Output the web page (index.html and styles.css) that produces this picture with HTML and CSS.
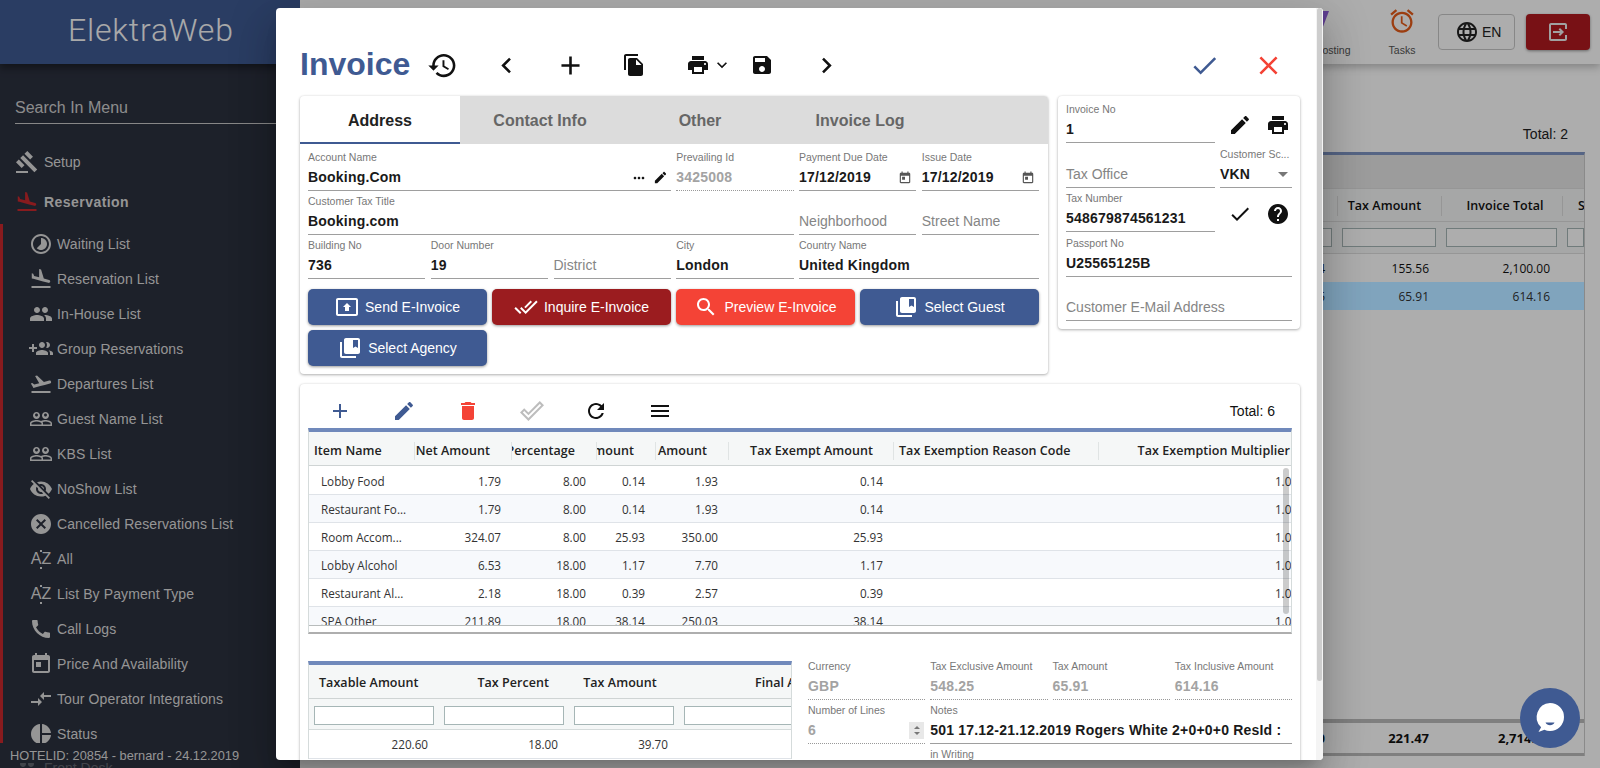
FILE: index.html
```html
<!DOCTYPE html>
<html lang="en">
<head>
  <meta charset="UTF-8">
  <meta name="viewport" content="width=device-width, initial-scale=1.0">
  <title>ElektraWeb - Invoice</title>
  <link rel="stylesheet" href="styles.css">
</head>
<body>
  <!-- material icons used all over the page -->
  <svg class="sprite" xmlns="http://www.w3.org/2000/svg">
    <symbol id="i-history" viewBox="0 0 24 24"><path d="M13 3c-4.97 0-9 4.03-9 9H1l3.89 3.89.07.14L9 12H6c0-3.87 3.13-7 7-7s7 3.13 7 7-3.13 7-7 7c-1.93 0-3.68-.79-4.94-2.06l-1.42 1.42C8.27 19.99 10.51 21 13 21c4.97 0 9-4.03 9-9s-4.03-9-9-9zm-1 5v5l4.28 2.54.72-1.21-3.5-2.08V8H12z"/></symbol>
    <symbol id="i-left" viewBox="0 0 24 24"><path d="M15.41 7.41L14 6l-6 6 6 6 1.41-1.41L10.83 12z"/></symbol>
    <symbol id="i-right" viewBox="0 0 24 24"><path d="M10 6L8.59 7.41 13.17 12l-4.58 4.59L10 18l6-6z"/></symbol>
    <symbol id="i-add" viewBox="0 0 24 24"><path d="M19 13h-6v6h-2v-6H5v-2h6V5h2v6h6v2z"/></symbol>
    <symbol id="i-copy" viewBox="0 0 24 24"><path d="M16 1H4c-1.1 0-2 .9-2 2v14h2V3h12V1zm-1 4l6 6v10c0 1.1-.9 2-2 2H7.99C6.89 23 6 22.1 6 21l.01-14c0-1.1.89-2 1.99-2h7zm-1 7h5.5L14 6.5V12z"/></symbol>
    <symbol id="i-print" viewBox="0 0 24 24"><path d="M19 8H5c-1.66 0-3 1.34-3 3v6h4v4h12v-4h4v-6c0-1.66-1.34-3-3-3zm-3 11H8v-5h8v5zm3-7c-.55 0-1-.45-1-1s.45-1 1-1 1 .45 1 1-.45 1-1 1zm-1-9H6v4h12V3z"/></symbol>
    <symbol id="i-expand" viewBox="0 0 24 24"><path d="M16.59 8.59L12 13.17 7.41 8.59 6 10l6 6 6-6z"/></symbol>
    <symbol id="i-save" viewBox="0 0 24 24"><path d="M17 3H5c-1.11 0-2 .9-2 2v14c0 1.1.89 2 2 2h14c1.1 0 2-.9 2-2V7l-4-4zm-5 16c-1.66 0-3-1.34-3-3s1.34-3 3-3 3 1.34 3 3-1.34 3-3 3zm3-10H5V5h10v4z"/></symbol>
    <symbol id="i-check" viewBox="0 0 24 24"><path d="M9 16.17L4.83 12l-1.42 1.41L9 19 21 7l-1.41-1.41z"/></symbol>
    <symbol id="i-close" viewBox="0 0 24 24"><path d="M19 6.41L17.59 5 12 10.59 6.41 5 5 6.41 10.59 12 5 17.59 6.41 19 12 13.41 17.59 19 19 17.59 13.41 12z"/></symbol>
    <symbol id="i-edit" viewBox="0 0 24 24"><path d="M3 17.25V21h3.75L17.81 9.94l-3.75-3.75L3 17.25zM20.71 7.04c.39-.39.39-1.02 0-1.41l-2.34-2.34c-.39-.39-1.02-.39-1.41 0l-1.83 1.83 3.75 3.75 1.83-1.83z"/></symbol>
    <symbol id="i-more" viewBox="0 0 24 24"><path d="M6 10c-1.1 0-2 .9-2 2s.9 2 2 2 2-.9 2-2-.9-2-2-2zm12 0c-1.1 0-2 .9-2 2s.9 2 2 2 2-.9 2-2-.9-2-2-2zm-6 0c-1.1 0-2 .9-2 2s.9 2 2 2 2-.9 2-2-.9-2-2-2z"/></symbol>
    <symbol id="i-today" viewBox="0 0 24 24"><path d="M19 3h-1V1h-2v2H8V1H6v2H5c-1.11 0-1.99.9-1.99 2L3 19c0 1.1.89 2 2 2h14c1.1 0 2-.9 2-2V5c0-1.1-.9-2-2-2zm0 16H5V8h14v11zM7 10h5v5H7z"/></symbol>
    <symbol id="i-help" viewBox="0 0 24 24"><path d="M12 2C6.48 2 2 6.48 2 12s4.48 10 10 10 10-4.48 10-10S17.52 2 12 2zm1 17h-2v-2h2v2zm2.07-7.75l-.9.92C13.45 12.9 13 13.5 13 15h-2v-.5c0-1.1.45-2.1 1.17-2.83l1.24-1.26c.37-.36.59-.86.59-1.41 0-1.1-.9-2-2-2s-2 .9-2 2H8c0-2.21 1.79-4 4-4s4 1.79 4 4c0 .88-.36 1.68-.93 2.25z"/></symbol>
    <symbol id="i-search" viewBox="0 0 24 24"><path d="M15.5 14h-.79l-.28-.27C15.41 12.59 16 11.11 16 9.5 16 5.91 13.09 3 9.5 3S3 5.91 3 9.5 5.91 16 9.5 16c1.61 0 3.09-.59 4.23-1.57l.27.28v.79l5 4.99L20.49 19l-4.99-5zm-6 0C7.01 14 5 11.99 5 9.5S7.01 5 9.5 5 14 7.01 14 9.5 11.99 14 9.5 14z"/></symbol>
    <symbol id="i-doneall" viewBox="0 0 24 24"><path d="M18 7l-1.41-1.41-6.34 6.34 1.41 1.41L18 7zm4.24-1.41L11.66 16.17 7.48 12l-1.41 1.41L11.66 19l12-12-1.42-1.41zM.41 13.41L6 19l1.41-1.41L1.83 12 .41 13.41z"/></symbol>
    <symbol id="i-doneoutline" viewBox="0 0 24 24"><path d="M19.77 4.93l1.4 1.4L8.43 19.07l-5.6-5.6 1.4-1.4 4.2 4.2L19.77 4.93m0-2.83L8.43 13.44l-4.2-4.2L0 13.47l8.43 8.43L24 6.33 19.77 2.1z"/></symbol>
    <symbol id="i-bookmarks" viewBox="0 0 24 24"><path d="M4 6H2v14c0 1.1.9 2 2 2h14v-2H4V6zm16-4H8c-1.1 0-2 .9-2 2v12c0 1.1.9 2 2 2h12c1.1 0 2-.9 2-2V4c0-1.1-.9-2-2-2zm0 10l-2.5-1.5L15 12V4h5v8z"/></symbol>
    <symbol id="i-send" viewBox="0 0 24 24"><path d="M21 3H3c-1.11 0-2 .89-2 2v14c0 1.11.89 2 2 2h18c1.11 0 2-.89 2-2V5c0-1.11-.89-2-2-2zm0 16.02H3V4.98h18v14.04zM10 12H8l4-4 4 4h-2v4h-4v-4z"/></symbol>
    <symbol id="i-delete" viewBox="0 0 24 24"><path d="M6 19c0 1.1.9 2 2 2h8c1.1 0 2-.9 2-2V7H6v12zM19 4h-3.5l-1-1h-5l-1 1H5v2h14V4z"/></symbol>
    <symbol id="i-refresh" viewBox="0 0 24 24"><path d="M17.65 6.35C16.2 4.9 14.21 4 12 4c-4.42 0-7.99 3.58-7.99 8s3.57 8 7.99 8c3.73 0 6.84-2.55 7.73-6h-2.08c-.82 2.33-3.04 4-5.65 4-3.31 0-6-2.69-6-6s2.69-6 6-6c1.66 0 3.14.69 4.22 1.78L13 11h7V4l-2.35 2.35z"/></symbol>
    <symbol id="i-menu" viewBox="0 0 24 24"><path d="M3 18h18v-2H3v2zm0-5h18v-2H3v2zm0-7v2h18V6H3z"/></symbol>
    <symbol id="i-drop" viewBox="0 0 24 24"><path d="M7 10l5 5 5-5z"/></symbol>
    <symbol id="i-gavel" viewBox="0 0 24 24"><path d="M1 21h12v2H1zM5.245 8.07l2.83-2.827 14.14 14.142-2.828 2.828zM12.317 1l5.657 5.656-2.83 2.83-5.654-5.66zM3.825 9.485l5.657 5.657-2.828 2.828-5.657-5.657z"/></symbol>
    <symbol id="i-land" viewBox="0 0 24 24"><path d="M2.5 19h19v2h-19zm7.18-5.73l4.35 1.16 5.31 1.42c.8.21 1.62-.26 1.84-1.06.21-.8-.26-1.62-1.06-1.84l-5.31-1.42-2.76-9.02L10.12 2v8.28L5.15 8.95l-.93-2.32-1.45-.39v5.17l1.6.43 5.31 1.43z"/></symbol>
    <symbol id="i-takeoff" viewBox="0 0 24 24"><path d="M2.5 19h19v2h-19zm19.57-9.36c-.21-.8-1.04-1.28-1.84-1.06L14.92 10l-6.9-6.43-1.93.51 4.14 7.17-4.97 1.33-1.97-1.54-1.45.39 1.82 3.16.77 1.33 1.6-.43 5.31-1.42 4.35-1.16L21 11.49c.81-.23 1.28-1.05 1.07-1.85z"/></symbol>
    <symbol id="i-people" viewBox="0 0 24 24"><path d="M16 11c1.66 0 2.99-1.34 2.99-3S17.66 5 16 5c-1.66 0-3 1.34-3 3s1.34 3 3 3zm-8 0c1.66 0 2.99-1.34 2.99-3S9.66 5 8 5C6.34 5 5 6.34 5 8s1.34 3 3 3zm0 2c-2.33 0-7 1.17-7 3.5V19h14v-2.5c0-2.33-4.67-3.5-7-3.5zm8 0c-.29 0-.62.02-.97.05 1.16.84 1.97 1.97 1.97 3.45V19h6v-2.5c0-2.33-4.67-3.5-7-3.5z"/></symbol>
    <symbol id="i-groupadd" viewBox="0 0 24 24"><path d="M8 10H5V7H3v3H0v2h3v3h2v-3h3v-2zm10 1c1.66 0 2.99-1.34 2.99-3S19.66 5 18 5c-.32 0-.63.05-.91.14.57.81.9 1.79.9 2.86s-.34 2.04-.9 2.86c.28.09.59.14.91.14zm-5 0c1.66 0 2.99-1.34 2.99-3S14.66 5 13 5c-1.66 0-3 1.34-3 3s1.34 3 3 3zm6.62 2.16c.83.73 1.38 1.66 1.38 2.84v2h3v-2c0-1.54-2.37-2.49-4.38-2.84zM13 13c-2 0-6 1-6 3v2h12v-2c0-2-4-3-6-3z"/></symbol>
    <symbol id="i-outline" viewBox="0 0 24 24"><path d="M16.5 13c-1.2 0-3.07.34-4.5 1-1.43-.67-3.3-1-4.5-1C5.33 13 1 14.08 1 16.25V19h22v-2.75c0-2.17-4.33-3.25-6.5-3.25zm-4 4.5h-10v-1.25c0-.54 2.56-1.75 5-1.75s5 1.21 5 1.75v1.25zm9 0H14v-1.25c0-.46-.2-.86-.52-1.22.88-.3 1.96-.53 3.02-.53 2.44 0 5 1.21 5 1.75v1.25zM7.5 12c1.93 0 3.5-1.57 3.5-3.5S9.43 5 7.5 5 4 6.57 4 8.5 5.57 12 7.5 12zm0-5.5c.83 0 1.5.67 1.5 1.5s-.67 1.5-1.5 1.5S6 8.83 6 8s.67-1.5 1.5-1.5zm9 5.5c1.93 0 3.5-1.57 3.5-3.5S18.43 5 16.5 5 13 6.57 13 8.5s1.57 3.5 3.5 3.5zm0-5.5c.83 0 1.5.67 1.5 1.5s-.67 1.5-1.5 1.5S15 8.83 15 8s.67-1.5 1.5-1.5z"/></symbol>
    <symbol id="i-noshow" viewBox="0 0 24 24"><path d="M12 7c2.76 0 5 2.24 5 5 0 .65-.13 1.26-.36 1.83l2.92 2.92c1.51-1.26 2.7-2.89 3.43-4.75-1.73-4.39-6-7.5-11-7.5-1.4 0-2.74.25-3.98.7l2.16 2.16C10.74 7.13 11.35 7 12 7zM2 4.27l2.28 2.28.46.46C3.08 8.3 1.78 10.02 1 12c1.73 4.39 6 7.5 11 7.5 1.55 0 3.03-.3 4.38-.84l.42.42L19.73 22 21 20.73 3.27 3 2 4.27zM7.53 9.8l1.55 1.55c-.05.21-.08.43-.08.65 0 1.66 1.34 3 3 3 .22 0 .44-.03.65-.08l1.55 1.55c-.67.33-1.41.53-2.2.53-2.76 0-5-2.24-5-5 0-.79.2-1.53.53-2.2zm4.31-.78l3.15 3.15.02-.16c0-1.66-1.34-3-3-3l-.17.01z"/></symbol>
    <symbol id="i-cancel" viewBox="0 0 24 24"><path d="M12 2C6.47 2 2 6.47 2 12s4.47 10 10 10 10-4.47 10-10S17.53 2 12 2zm5 13.59L15.59 17 12 13.41 8.41 17 7 15.59 10.59 12 7 8.41 8.41 7 12 10.59 15.59 7 17 8.41 13.41 12 17 15.59z"/></symbol>
    <symbol id="i-call" viewBox="0 0 24 24"><path d="M20.01 15.38c-1.23 0-2.42-.2-3.53-.56-.35-.12-.74-.03-1.01.24l-1.57 1.97c-2.83-1.35-5.48-3.9-6.89-6.83l1.95-1.66c.27-.28.35-.67.24-1.02-.37-1.11-.56-2.3-.56-3.53 0-.54-.45-.99-.99-.99H4.19C3.65 3 3 3.24 3 3.99 3 13.28 10.73 21 20.01 21c.71 0 .99-.63.99-1.18v-3.45c0-.54-.45-.99-.99-.99z"/></symbol>
    <symbol id="i-compare" viewBox="0 0 24 24"><path d="M9.01 14H2v2h7.01v3L13 15l-3.99-4v3zm5.98-1v-3H22V8h-7.01V5L11 9l3.99 4z"/></symbol>
    <symbol id="i-pie" viewBox="0 0 24 24"><path d="M11 2v20c-5.07-.5-9-4.79-9-10s3.93-9.5 9-10zm2.03 0v8.99H22c-.47-4.74-4.24-8.52-8.97-8.99zm0 11.01V22c4.74-.47 8.5-4.25 8.97-8.99h-8.97z"/></symbol>
    <symbol id="i-timelapse" viewBox="0 0 24 24"><path d="M16.24 7.76C15.07 6.59 13.54 6 12 6v6l-4.24 4.24c2.34 2.34 6.14 2.34 8.49 0 2.34-2.34 2.34-6.14-.01-8.48zM12 2C6.48 2 2 6.48 2 12s4.48 10 10 10 10-4.48 10-10S17.52 2 12 2zm0 18c-4.42 0-8-3.58-8-8s3.58-8 8-8 8 3.58 8 8-3.58 8-8 8z"/></symbol>
    <symbol id="i-globe" viewBox="0 0 24 24"><path d="M11.99 2C6.47 2 2 6.48 2 12s4.47 10 9.99 10C17.52 22 22 17.52 22 12S17.52 2 11.99 2zm6.93 6h-2.95c-.32-1.25-.78-2.45-1.38-3.56 1.84.63 3.37 1.91 4.33 3.56zM12 4.04c.83 1.2 1.48 2.53 1.91 3.96h-3.82c.43-1.43 1.08-2.76 1.91-3.96zM4.26 14C4.1 13.36 4 12.69 4 12s.1-1.36.26-2h3.38c-.08.66-.14 1.32-.14 2 0 .68.06 1.34.14 2H4.26zm.82 2h2.95c.32 1.25.78 2.45 1.38 3.56-1.84-.63-3.37-1.9-4.33-3.56zm2.95-8H5.08c.96-1.66 2.49-2.93 4.33-3.56C8.81 5.55 8.35 6.75 8.03 8zM12 19.96c-.83-1.2-1.48-2.53-1.91-3.96h3.82c-.43 1.43-1.08 2.76-1.91 3.96zM14.34 14H9.66c-.09-.66-.16-1.32-.16-2 0-.68.07-1.35.16-2h4.68c.09.65.16 1.32.16 2 0 .68-.07 1.34-.16 2zm.25 5.56c.6-1.11 1.06-2.31 1.38-3.56h2.95c-.96 1.65-2.49 2.93-4.33 3.56zM16.36 14c.08-.66.14-1.32.14-2 0-.68-.06-1.34-.14-2h3.38c.16.64.26 1.31.26 2s-.1 1.36-.26 2h-3.38z"/></symbol>
    <symbol id="i-alarm" viewBox="0 0 24 24"><path d="M22 5.72l-4.6-3.86-1.29 1.53 4.6 3.86L22 5.72zM7.88 3.39L6.6 1.86 2 5.71l1.29 1.53 4.59-3.85zM12.5 8H11v6l4.75 2.85.75-1.23-4-2.37V8zM12 4c-4.97 0-9 4.03-9 9s4.02 9 9 9c4.97 0 9-4.03 9-9s-4.03-9-9-9zm0 16c-3.87 0-7-3.13-7-7s3.13-7 7-7 7 3.13 7 7-3.13 7-7 7z"/></symbol>
    <symbol id="i-logout" viewBox="0 0 24 24"><path d="M19 3H5c-1.1 0-2 .9-2 2v14c0 1.1.9 2 2 2h14c1.1 0 2-.9 2-2v-4h-2v4H5V5h14v4h2V5c0-1.1-.9-2-2-2zM14 8l-1.4 1.4 1.6 1.6H7v2h7.2l-1.6 1.6L14 16l4-4z"/></symbol>
  </svg>

  <div class="app">
    <aside class="sidebar">
      <div class="logo">ElektraWeb</div>
      <div class="side-search">Search In Menu</div>
      <div class="side-item"><svg class="ico"><use href="#i-gavel"/></svg><span>Setup</span></div>
      <div class="side-item side-item-open"><svg class="ico"><use href="#i-land"/></svg><span>Reservation</span></div>
      <div class="side-sub">
        <div class="sub-item"><svg class="ico"><use href="#i-timelapse"/></svg><span>Waiting List</span></div>
        <div class="sub-item"><svg class="ico"><use href="#i-land"/></svg><span>Reservation List</span></div>
        <div class="sub-item"><svg class="ico"><use href="#i-people"/></svg><span>In-House List</span></div>
        <div class="sub-item"><svg class="ico"><use href="#i-groupadd"/></svg><span>Group Reservations</span></div>
        <div class="sub-item"><svg class="ico"><use href="#i-takeoff"/></svg><span>Departures List</span></div>
        <div class="sub-item"><svg class="ico"><use href="#i-outline"/></svg><span>Guest Name List</span></div>
        <div class="sub-item"><svg class="ico"><use href="#i-outline"/></svg><span>KBS List</span></div>
        <div class="sub-item"><svg class="ico"><use href="#i-noshow"/></svg><span>NoShow List</span></div>
        <div class="sub-item"><svg class="ico"><use href="#i-cancel"/></svg><span>Cancelled Reservations List</span></div>
        <div class="sub-item"><b class="az">AZ</b><span>All</span></div>
        <div class="sub-item"><b class="az">AZ</b><span>List By Payment Type</span></div>
        <div class="sub-item"><svg class="ico"><use href="#i-call"/></svg><span>Call Logs</span></div>
        <div class="sub-item"><svg class="ico"><use href="#i-today"/></svg><span>Price And Availability</span></div>
        <div class="sub-item"><svg class="ico"><use href="#i-compare"/></svg><span>Tour Operator Integrations</span></div>
        <div class="sub-item"><svg class="ico"><use href="#i-pie"/></svg><span>Status</span></div>
      </div>
      <div class="side-item side-item-next"><svg class="ico"><use href="#i-people"/></svg><span>Front Desk</span></div>
      <div class="side-foot">HOTELID: 20854 - bernard - 24.12.2019</div>
    </aside>

    <main class="main">
      <header class="topbar">
        <div class="top-link top-link-posting">
          <svg class="posting-ico" viewBox="0 0 24 24"><path d="M2 2h20l-8 21h-4z"/></svg>
          <span>Posting</span>
        </div>
        <div class="top-link">
          <svg class="tasks-ico"><use href="#i-alarm"/></svg>
          <span>Tasks</span>
        </div>
        <div class="lang-btn"><svg class="ico"><use href="#i-globe"/></svg><span>EN</span></div>
        <div class="logout-btn"><svg class="ico"><use href="#i-logout"/></svg></div>
      </header>

      <div class="list-total">Total: 2</div>
      <div class="list-grid">
        <div class="list-band"></div>
        <div class="list-row list-head">
          <div></div><div class="hsep hsep-tax">Tax Amount</div><div class="hsep hsep-total">Invoice Total</div><div class="hsep hsep-last">S</div>
        </div>
        <div class="list-row list-filter">
          <div><i class="box"></i></div><div><i class="box"></i></div><div><i class="box"></i></div><div><i class="box"></i></div>
        </div>
        <div class="list-row list-cell"><div>4</div><div>155.56</div><div>2,100.00</div><div></div></div>
        <div class="list-row list-cell list-selected"><div>5</div><div>65.91</div><div>614.16</div><div></div></div>
        <div class="list-spacer"></div>
        <div class="list-row list-sum"><div>0</div><div>221.47</div><div>2,714.16</div><div></div></div>
      </div>
    </main>
  </div>

  <div class="backdrop"></div>

  <section class="modal">
    <div class="modal-scroll"><i></i></div>

    <div class="modal-head">
      <h1>Invoice</h1>
      <span class="tool"><svg class="ico-lg"><use href="#i-history"/></svg></span>
      <span class="tool"><svg class="ico-lg"><use href="#i-left"/></svg></span>
      <span class="tool"><svg class="ico-lg"><use href="#i-add"/></svg></span>
      <span class="tool"><svg class="ico"><use href="#i-copy"/></svg></span>
      <span class="tool tool-print"><svg class="ico"><use href="#i-print"/></svg><svg class="ico-chev"><use href="#i-expand"/></svg></span>
      <span class="tool"><svg class="ico"><use href="#i-save"/></svg></span>
      <span class="tool"><svg class="ico-lg"><use href="#i-right"/></svg></span>
      <span class="tool tool-push"><svg class="ico-lg blue"><use href="#i-check"/></svg></span>
      <span class="tool"><svg class="ico-lg red"><use href="#i-close"/></svg></span>
    </div>

    <div class="top-cards">
      <div class="card card-address">
        <div class="tabs">
          <div class="tab tab-active">Address</div>
          <div class="tab">Contact Info</div>
          <div class="tab">Other</div>
          <div class="tab">Invoice Log</div>
        </div>
        <div class="address-grid">
          <div class="field span-3">
            <label>Account Name</label>
            <div class="value">Booking.Com
              <svg class="mini mini-more"><use href="#i-more"/></svg>
              <svg class="mini mini-edit"><use href="#i-edit"/></svg>
            </div>
          </div>
          <div class="field field-off"><label>Prevailing Id</label><div class="value">3425008</div></div>
          <div class="field"><label>Payment Due Date</label><div class="value">17/12/2019<svg class="mini mini-date"><use href="#i-today"/></svg></div></div>
          <div class="field"><label>Issue Date</label><div class="value">17/12/2019<svg class="mini mini-date"><use href="#i-today"/></svg></div></div>

          <div class="field span-4"><label>Customer Tax Title</label><div class="value">Booking.com</div></div>
          <div class="field"><label></label><div class="value empty">Neighborhood</div></div>
          <div class="field"><label></label><div class="value empty">Street Name</div></div>

          <div class="field"><label>Building No</label><div class="value">736</div></div>
          <div class="field"><label>Door Number</label><div class="value">19</div></div>
          <div class="field"><label></label><div class="value empty">District</div></div>
          <div class="field"><label>City</label><div class="value">London</div></div>
          <div class="field span-2"><label>Country Name</label><div class="value">United Kingdom</div></div>
        </div>
        <div class="btn-grid">
          <div class="btn btn-blue"><svg class="ico"><use href="#i-send"/></svg>Send E-Invoice</div>
          <div class="btn btn-dark"><svg class="ico"><use href="#i-doneall"/></svg>Inquire E-Invoice</div>
          <div class="btn btn-red"><svg class="ico"><use href="#i-search"/></svg>Preview E-Invoice</div>
          <div class="btn btn-blue"><svg class="ico"><use href="#i-bookmarks"/></svg>Select Guest</div>
          <div class="btn btn-blue"><svg class="ico"><use href="#i-bookmarks"/></svg>Select Agency</div>
        </div>
      </div>

      <div class="card card-side">
        <div class="side-row">
          <div class="field"><label>Invoice No</label><div class="value">1</div></div>
          <div class="side-icons">
            <svg class="ico"><use href="#i-edit"/></svg>
            <svg class="ico"><use href="#i-print"/></svg>
          </div>
        </div>
        <div class="side-row side-row-gap">
          <div class="field"><label></label><div class="value empty">Tax Office</div></div>
          <div class="field"><label>Customer Sc...</label><div class="value">VKN<svg class="mini-drop"><use href="#i-drop"/></svg></div></div>
        </div>
        <div class="side-row">
          <div class="field"><label>Tax Number</label><div class="value">548679874561231</div></div>
          <div class="side-icons">
            <svg class="ico"><use href="#i-check"/></svg>
            <svg class="ico"><use href="#i-help"/></svg>
          </div>
        </div>
        <div class="field side-row-gap"><label>Passport No</label><div class="value">U25565125B</div></div>
        <div class="field"><label></label><div class="value empty">Customer E-Mail Address</div></div>
      </div>
    </div>

    <div class="card card-lines">
      <div class="lines-toolbar">
        <span class="tool"><svg class="ico blue"><use href="#i-add"/></svg></span>
        <span class="tool"><svg class="ico blue"><use href="#i-edit"/></svg></span>
        <span class="tool"><svg class="ico red"><use href="#i-delete"/></svg></span>
        <span class="tool"><svg class="ico faded"><use href="#i-doneoutline"/></svg></span>
        <span class="tool"><svg class="ico"><use href="#i-refresh"/></svg></span>
        <span class="tool"><svg class="ico"><use href="#i-menu"/></svg></span>
        <span class="lines-total">Total: 6</span>
      </div>

      <div class="grid lines">
        <div class="grid-row grid-head">
          <div class="th th-left">Item Name</div>
          <div class="th"><span>Net Amount</span></div>
          <div class="th"><span>Tax Percentage</span></div>
          <div class="th"><span>Tax Amount</span></div>
          <div class="th"><span>Amount</span></div>
          <div class="th"><span>Tax Exempt Amount</span></div>
          <div class="th th-left">Tax Exemption Reason Code</div>
          <div class="th th-last"><span>Tax Exemption Multiplier</span></div>
        </div>
        <div class="grid-body">
          <div class="grid-row"><div class="td td-left">Lobby Food</div><div class="td">1.79</div><div class="td">8.00</div><div class="td">0.14</div><div class="td">1.93</div><div class="td">0.14</div><div class="td"></div><div class="td">1.00</div></div>
          <div class="grid-row"><div class="td td-left">Restaurant Fo...</div><div class="td">1.79</div><div class="td">8.00</div><div class="td">0.14</div><div class="td">1.93</div><div class="td">0.14</div><div class="td"></div><div class="td">1.00</div></div>
          <div class="grid-row"><div class="td td-left">Room Accom...</div><div class="td">324.07</div><div class="td">8.00</div><div class="td">25.93</div><div class="td">350.00</div><div class="td">25.93</div><div class="td"></div><div class="td">1.00</div></div>
          <div class="grid-row"><div class="td td-left">Lobby Alcohol</div><div class="td">6.53</div><div class="td">18.00</div><div class="td">1.17</div><div class="td">7.70</div><div class="td">1.17</div><div class="td"></div><div class="td">1.00</div></div>
          <div class="grid-row"><div class="td td-left">Restaurant Al...</div><div class="td">2.18</div><div class="td">18.00</div><div class="td">0.39</div><div class="td">2.57</div><div class="td">0.39</div><div class="td"></div><div class="td">1.00</div></div>
          <div class="grid-row"><div class="td td-left">SPA Other</div><div class="td">211.89</div><div class="td">18.00</div><div class="td">38.14</div><div class="td">250.03</div><div class="td">38.14</div><div class="td"></div><div class="td">1.00</div></div>
          <i class="grid-thumb"></i>
        </div>
      </div>

      <div class="lines-bottom">
        <div class="grid taxes">
          <div class="tax-row tax-head">
            <div>Taxable Amount</div><div class="tax-r">Tax Percent</div><div class="tax-c">Tax Amount</div><div class="tax-final">Final Amount</div>
          </div>
          <div class="tax-row tax-filter">
            <div><i class="box"></i></div><div><i class="box"></i></div><div><i class="box"></i></div><div><i class="box"></i></div>
          </div>
          <div class="tax-row tax-cell">
            <div>220.60</div><div>18.00</div><div>39.70</div><div></div>
          </div>
        </div>

        <div class="totals">
          <div class="field field-off"><label>Currency</label><div class="value">GBP</div></div>
          <div class="field field-off"><label>Tax Exclusive Amount</label><div class="value">548.25</div></div>
          <div class="field field-off"><label>Tax Amount</label><div class="value">65.91</div></div>
          <div class="field field-off"><label>Tax Inclusive Amount</label><div class="value">614.16</div></div>
          <div class="field field-off"><label>Number of Lines</label><div class="value">6<span class="stepper"><i></i><i></i></span></div></div>
          <div class="field span-3"><label>Notes</label><div class="value">501 17.12-21.12.2019 Rogers White 2+0+0+0 ResId :</div></div>
          <div class="field field-plain col-2"><label>in Writing</label></div>
        </div>
      </div>
    </div>
  </section>

  <div class="chat-fab">
    <svg viewBox="0 0 36 36" width="36" height="36">
      <path fill="#fff" d="M18 3a14 14 0 0 1 0 28c-2 0-3.900-.4-5.600-1.200L6.500 32l2.600-4.800A14 14 0 0 1 18 3z"/>
      <path fill="#3f5a92" d="M13.500 22.500h9c-.8 1.700-2.500 2.700-4.500 2.700s-3.700-1-4.500-2.700z"/>
    </svg>
  </div>
</body>
</html>
```

FILE: styles.css
```css
* {
  box-sizing: border-box;
}

body {
  margin: 0;
  width: 1600px;
  height: 768px;
  overflow: hidden;
  font-family: 'Liberation Sans', Arial, sans-serif;
  color: #111;
  background: #fff;
}

.sprite {
  display: none;
}

.ico {
  width: 24px;
  height: 24px;
  flex: none;
  fill: currentColor;
}

.ico-lg {
  width: 31px;
  height: 31px;
  flex: none;
  fill: currentColor;
}

.blue { color: #3f5a92; }
.red { color: #f44336; }
.faded { color: #bdbdbd; }

/* page behind the dialog */
.app {
  display: flex;
  height: 768px;
}

.sidebar {
  position: relative;
  width: 300px;
  flex: none;
  overflow: hidden;
  background: #2c313f;
  color: #dcdcdc;
}

.logo {
  height: 64px;
  padding-left: 68px;
  background: #3f5a92;
  color: #fafafa;
  font-family: 'Roboto', sans-serif;
  font-size: 32px;
  font-weight: 300;
  letter-spacing: .8px;
  line-height: 60px;
  box-shadow: 0 4px 8px rgba(0,0,0,.4);
}

.side-search {
  height: 28px;
  margin: 32px 0 18px 15px;
  border-bottom: 1px solid #c8c8c8;
  font-size: 16px;
  color: #cfcfcf;
  line-height: 24px;
}

.side-item {
  display: flex;
  align-items: center;
  gap: 5px;
  height: 40px;
  padding-left: 15px;
  font-size: 14px;
}

.side-item-open {
  font-weight: 700;
  letter-spacing: .45px;
}

.side-item-open .ico {
  color: #c9282d;
}

.side-item-next {
  margin-top: -3px;
  opacity: .3;
}

.side-sub {
  margin-top: 2px;
  padding-top: 2px;
  border-left: 3px solid #c9282d;
}

.sub-item {
  display: flex;
  align-items: center;
  gap: 4px;
  height: 35px;
  padding-left: 26px;
  font-size: 14px;
  letter-spacing: .1px;
}

.az {
  position: relative;
  width: 24px;
  flex: none;
  font-size: 16px;
  font-weight: 400;
  line-height: 18px;
  text-align: center;
}

.az::before {
  content: "";
  position: absolute;
  left: 11px;
  top: 0;
  width: 2px;
  height: 2px;
  background: currentColor;
  box-shadow: 0 17px 0 currentColor;
}

.side-foot {
  position: absolute;
  left: 0;
  right: 0;
  top: 743px;
  height: 20px;
  padding-left: 10px;
  background: #2c313f;
  font-size: 12.8px;
  line-height: 26px;
}

.main {
  flex: 1;
  display: flex;
  flex-direction: column;
  padding-bottom: 12px;
  background: #fff;
  min-width: 0;
}

.topbar {
  display: flex;
  justify-content: flex-end;
  height: 64px;
  padding-right: 10px;
  background: #fff;
  box-shadow: 0 3px 8px rgba(0,0,0,.25);
}

.top-link {
  display: flex;
  flex-direction: column;
  align-items: center;
  width: 72px;
  padding-top: 7px;
  gap: 8px;
  font-size: 10.5px;
  line-height: 14px;
  color: #555;
}

.top-link-posting span {
  margin-left: 6px;
}

.posting-ico {
  width: 24px;
  height: 28px;
  margin-right: 22px;
  fill: #8e5dd8;
}

.tasks-ico {
  width: 28px;
  height: 28px;
  fill: #e65c1a;
}

.lang-btn {
  display: flex;
  align-items: center;
  gap: 3px;
  width: 77px;
  height: 36px;
  margin-top: 14px;
  padding-left: 16px;
  border: 1px solid #c8c8c8;
  border-radius: 4px;
  font-size: 14px;
  color: #222;
}

.logout-btn {
  display: flex;
  align-items: center;
  justify-content: center;
  width: 64px;
  height: 36px;
  margin: 14px 0 0 11px;
  border-radius: 4px;
  background: #b21a1f;
  color: #eee;
  box-shadow: 0 1px 3px rgba(0,0,0,.4);
}

.list-total {
  margin: 60px 32px 8px 0;
  font-size: 14px;
  line-height: 20px;
  text-align: right;
  color: #222;
}

.list-grid {
  flex: 1;
  display: flex;
  flex-direction: column;
  margin-right: 15px;
  border-top: 3px solid #7f95c4;
  border-right: 1px solid #ccc;
  font-family: 'Open Sans', 'Noto Sans', sans-serif;
  font-size: 12px;
}

.list-band {
  height: 34px;
  background: #e6e6e6;
  border-bottom: 1px solid #ddd;
}

.list-row {
  display: grid;
  grid-template-columns: 1fr 104px 121px 22px;
}

.list-head {
  height: 33px;
  background: #f5f7f7;
  border-bottom: 1px solid #ddd;
  font-weight: 600;
  font-size: 12.5px;
  letter-spacing: .05px;
}

.list-head .hsep {
  border-left: 1px solid #ddd;
  margin: 7px 0 5px;
  line-height: 20px;
  text-align: center;
  overflow: hidden;
}

.list-head .hsep-tax {
  padding-right: 10px;
}

.list-head .hsep-total {
  padding-left: 6px;
}

.list-head .hsep-last {
  padding-left: 15px;
  text-align: left;
}

.list-filter {
  height: 32px;
  padding-top: 6px;
  border-bottom: 1px solid #ddd;
  background: #f5f7f7;
}

.list-filter > div {
  padding: 0 5px;
}

.list-filter > div:last-child {
  padding-right: 0;
}

.box {
  display: block;
  height: 19px;
  background: #fff;
  border: 1px solid #a6b6b6;
}

.list-cell {
  height: 28px;
  line-height: 30px;
  text-align: right;
}

.list-cell > div,
.list-sum > div {
  padding-right: 12px;
}

/* sits above the backdrop, its dimmed blue can't be reached through it */
.list-selected {
  position: relative;
  z-index: 1;
  background: #80a4bd;
  color: #222;
}

.list-spacer {
  flex: 1;
  border-bottom: 4px solid #bbb;
}

.list-sum {
  height: 33px;
  line-height: 30px;
  font-weight: 700;
  text-align: right;
  font-size: 13px;
  border-bottom: 3px solid #bbb;
}

.backdrop {
  position: absolute;
  inset: 0;
  background: rgba(0,0,0,.32);
}

/* invoice dialog */
.modal {
  position: absolute;
  z-index: 2;
  left: 276px;
  top: 8px;
  width: 1047px;
  height: 752px;
  overflow: hidden;
  padding: 0 23px 0 24px;
  border-radius: 4px;
  background: #fff;
  box-shadow: 0 11px 15px -7px rgba(0,0,0,.2), 0 24px 38px 3px rgba(0,0,0,.14), 0 9px 46px 8px rgba(0,0,0,.12);
}

.modal-scroll {
  position: absolute;
  right: 0;
  top: 0;
  bottom: 0;
  width: 7px;
  background: #f4f4f4;
}

.modal-scroll i {
  display: block;
  width: 5px;
  height: 673px;
  margin-left: 1px;
  border-radius: 3px;
  background: #cdcdcd;
}

.modal-head {
  display: flex;
  align-items: center;
  height: 62px;
  margin-top: 26px;
}

.modal-head h1 {
  width: 110px;
  margin: 0 0 2px;
  flex: none;
  color: #3f5a92;
  font-size: 32px;
  font-weight: 700;
}

.tool {
  display: flex;
  align-items: center;
  justify-content: center;
  width: 64px;
  flex: none;
}

.tool-print {
  justify-content: flex-start;
  padding-left: 20px;
}

.ico-chev {
  width: 20px;
  height: 20px;
  flex: none;
  margin-left: 2px;
  fill: currentColor;
}

.tool-push {
  margin-left: auto;
}

.top-cards {
  display: flex;
  align-items: flex-start;
  gap: 10px;
}

.card {
  background: #fff;
  border-radius: 4px;
  box-shadow: 0 1px 3px rgba(0,0,0,.3), 0 0 2px rgba(0,0,0,.08);
}

.card-address {
  width: 748px;
  height: 278px;
  overflow: hidden;
}

.tabs {
  display: flex;
  height: 48px;
  background: #dcdcdc;
}

.tab {
  width: 160px;
  font-size: 16px;
  font-weight: 700;
  line-height: 49px;
  text-align: center;
  color: #666;
}

.tab-active {
  background: #fff;
  color: #222;
  border-bottom: 2px solid #3f5a92;
}

.address-grid {
  display: grid;
  grid-template-columns: repeat(6, 1fr);
  column-gap: 5.5px;
  padding: 3px 9px 0 8px;
}

.span-2 { grid-column: span 2; }
.span-3 { grid-column: span 3; }
.span-4 { grid-column: span 4; }
.col-2 { grid-column: 2; }

.field {
  height: 44px;
  padding-top: 2px;
  border-bottom: 1px solid #9e9e9e;
  min-width: 0;
}

.field label {
  display: block;
  height: 16px;
  font-size: 10.5px;
  line-height: 16px;
  color: #777;
  white-space: nowrap;
}

.value {
  position: relative;
  display: flex;
  align-items: center;
  height: 24px;
  font-size: 14px;
  font-weight: 700;
  letter-spacing: .2px;
  color: #1a1a1a;
  white-space: nowrap;
}

.value.empty {
  font-weight: 400;
  letter-spacing: 0;
  color: #858585;
}

.field-off {
  border-bottom: 1px dotted #999;
}

.field-off .value {
  color: #a3a3a3;
}

.field-plain {
  border-bottom: 0;
}

.mini {
  position: absolute;
  width: 14px;
  height: 14px;
  fill: #555;
}

.mini-more {
  right: 24px;
  top: 5px;
  width: 16px;
  height: 16px;
  fill: #111;
}

.mini-edit {
  right: 3px;
  top: 5px;
  width: 15px;
  height: 15px;
  fill: #111;
}

.mini-date {
  right: 4px;
  top: 6px;
}

.mini-drop {
  position: absolute;
  right: -3px;
  top: 0;
  width: 24px;
  height: 24px;
  fill: #777;
}

.btn-grid {
  display: grid;
  grid-template-columns: repeat(4, 1fr);
  gap: 5px;
  margin-top: 10px;
  padding: 0 9px 0 8px;
}

.btn {
  display: flex;
  align-items: center;
  justify-content: center;
  gap: 6px;
  height: 36px;
  border-radius: 5px;
  color: #fff;
  font-size: 14px;
  box-shadow: 0 1px 3px rgba(0,0,0,.4);
}

.btn-blue { background: #3f5a92; }
.btn-dark { background: #9b1c1f; }
.btn-red { background: #f44336; }

.card-side {
  width: 242px;
  height: 233px;
  padding: 3px 8px 0;
}

.side-row {
  display: grid;
  grid-template-columns: 149px 72px;
  column-gap: 5px;
}

.side-row-gap {
  margin-top: 1px;
}

.side-icons {
  display: flex;
  gap: 14px;
  padding: 14px 0 0 8px;
  width: 76px;
}

.card-lines {
  height: 400px;
  margin-top: 10px;
  padding: 0 8px;
}

.lines-toolbar {
  display: flex;
  align-items: center;
  height: 44px;
  padding-top: 10px;
  font-size: 14px;
}

.lines-total {
  margin-left: auto;
  padding-right: 17px;
}

/* data grids, same skin on both */
.grid {
  border-top: 4px solid #7089bb;
  border-left: 1px solid #d5dbdb;
  font-family: 'Open Sans', 'Noto Sans', sans-serif;
  overflow: hidden;
}

.lines {
  width: 984px;
  border-right: 1px solid #d5dbdb;
  border-bottom: 2px solid #aeaeae;
  padding-bottom: 6px;
}

.grid-row {
  display: grid;
  grid-template-columns: 106px 97px 85px 59px 73px 165px 205px 210px;
  height: 28px;
  border-bottom: 1px solid #dfe3e8;
}

.grid-row:first-child {
  height: 29px;
}

.grid-head {
  height: 34px;
  background: #f5f7f7;
  border-bottom: 1px solid #cfd4d4;
  align-items: center;
}

.grid-row.grid-head {
  height: 34px;
}

.th {
  display: flex;
  justify-content: flex-end;
  height: 18px;
  padding-right: 21px;
  border-right: 1px solid #e0e4e4;
  overflow: hidden;
  font-size: 12.5px;
  font-weight: 600;
  letter-spacing: .05px;
  line-height: 18px;
  margin-top: 4px;
  color: #222;
  white-space: nowrap;
}

.th span {
  flex: none;
}

.th-left {
  justify-content: flex-start;
  padding: 0 0 0 5px;
}

.th:nth-child(6) {
  padding-right: 20px;
}

.th-last {
  padding-right: 19px;
  border-right: 0;
}

.grid-body {
  position: relative;
  height: 160px;
  overflow: hidden;
  border-bottom: 1px solid #b8bcbc;
}

.grid-body .grid-row:nth-child(even) {
  background: #f7f9fc;
}

.td {
  display: flex;
  justify-content: flex-end;
  align-items: center;
  padding: 1px 11px 0 0;
  font-size: 11.7px;
  color: #333;
  overflow: hidden;
  white-space: nowrap;
}

.td-left {
  justify-content: flex-start;
  padding: 1px 0 0 12px;
}

.grid-thumb {
  position: absolute;
  right: 2px;
  top: 2px;
  width: 6px;
  height: 146px;
  border-radius: 3px;
  background: rgba(0,0,0,.2);
}

.lines-bottom {
  display: flex;
  align-items: flex-start;
  gap: 16px;
  margin-top: 22px;
}

.taxes {
  width: 484px;
  flex: none;
  margin-top: 5px;
  border-right: 1px solid #d5dbdb;
}

.tax-row {
  display: grid;
  grid-template-columns: 130px 130px 110px 200px;
  white-space: nowrap;
}

.tax-head {
  height: 34px;
  background: #f5f7f7;
  border-bottom: 1px solid #cfd4d4;
  font-size: 12.5px;
  font-weight: 600;
  letter-spacing: .05px;
  line-height: 36px;
  color: #222;
}

.tax-head > div {
  padding-left: 10px;
  overflow: hidden;
}

.tax-head .tax-r {
  padding: 0 20px 0 0;
  text-align: right;
}

.tax-head .tax-c {
  padding: 0 8px 0 0;
  text-align: center;
}

.tax-head .tax-final {
  padding-left: 76px;
}

.tax-filter {
  height: 31px;
  padding-top: 7px;
  background: #f5f7f7;
  border-bottom: 1px solid #d5dbdb;
}

.tax-filter > div {
  padding: 0 5px;
}

.tax-cell {
  height: 29px;
  line-height: 29px;
  font-size: 11.7px;
  color: #333;
  text-align: right;
  border-bottom: 1px solid #dfe3e8;
}

.tax-cell > div {
  padding-right: 11px;
}

.totals {
  flex: 1;
  display: grid;
  grid-template-columns: repeat(4, 1fr);
  column-gap: 5px;
}

.stepper {
  position: absolute;
  right: 1px;
  top: 4px;
  display: flex;
  flex-direction: column;
  justify-content: center;
  gap: 3px;
  align-items: center;
  width: 15px;
  height: 17px;
  background: #e8e8e8;
}

.stepper i {
  width: 0;
  height: 0;
  border-left: 3px solid transparent;
  border-right: 3px solid transparent;
  border-bottom: 3px solid #777;
}

.stepper i + i {
  border-bottom: 0;
  border-top: 3px solid #777;
}

.chat-fab {
  position: absolute;
  z-index: 3;
  left: 1520px;
  top: 688px;
  display: flex;
  align-items: center;
  justify-content: center;
  width: 60px;
  height: 60px;
  border-radius: 50%;
  background: #3f5a92;
}
```
